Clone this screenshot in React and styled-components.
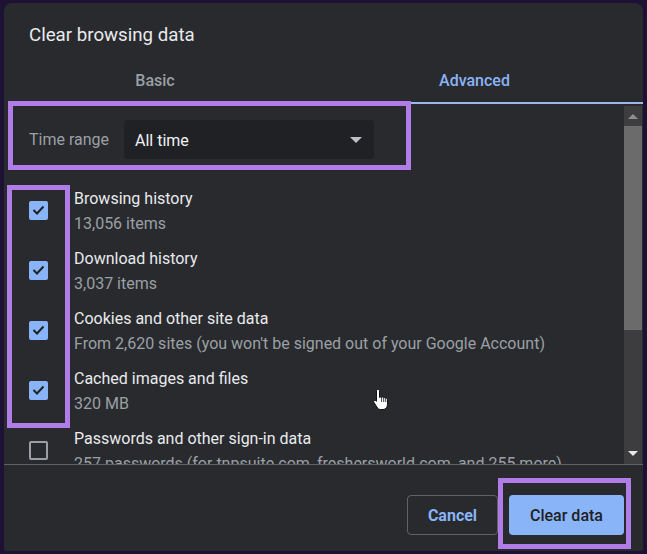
import React from "react";
import styled, { createGlobalStyle } from "styled-components";

const GlobalStyle = createGlobalStyle`
  html, body { margin: 0; padding: 0; }
  body {
    background: #1d1233;
    font-family: Roboto, "Liberation Sans", Arial, sans-serif;
    -webkit-font-smoothing: antialiased;
  }
  * { box-sizing: border-box; }
`;

const Page = styled.div`
  width: 647px;
  height: 554px;
  padding: 3px 4px;
`;

const Dialog = styled.div`
  position: relative;
  width: 639px;
  height: 548px;
  background: #292a2d;
  border-radius: 8px 8px 2px 2px;
  display: flex;
  flex-direction: column;
  overflow: hidden;
`;

const Title = styled.h1`
  margin: 0;
  height: 53px;
  padding: 20px 0 0 25px;
  font-size: 18.7px;
  line-height: 24px;
  font-weight: 400;
  color: #e8eaed;
`;

const Tabs = styled.div`
  display: flex;
  height: 48px;
  flex-shrink: 0;
`;

const Tab = styled.div`
  ${(p) => (p.$width ? `width: ${p.$width}px;` : "flex: 1;")}
  display: flex;
  align-items: center;
  justify-content: center;
  padding-top: 2px;
  font-size: 16px;
  font-weight: 500;
  color: ${(p) => (p.$active ? "#8ab4f8" : "#9aa0a6")};
  border-bottom: 2px solid ${(p) => (p.$active ? "#9db5f0" : "transparent")};
`;

const Body = styled.div`
  height: 360px;
  display: flex;
  flex-shrink: 0;
`;

const Content = styled.div`
  flex: 1;
  overflow: hidden;
`;

const TimeRow = styled.div`
  height: 76px;
  padding: 16px 0 0 25px;
  display: flex;
  align-items: flex-start;
`;

const TimeLabel = styled.span`
  height: 39px;
  line-height: 40px;
  width: 95px;
  font-size: 16px;
  color: #9aa0a6;
`;

const Select = styled.div`
  width: 250px;
  height: 39px;
  background: #202124;
  border-radius: 4px;
  padding: 1px 12px 0 11px;
  display: flex;
  align-items: center;
  justify-content: space-between;
  font-size: 16px;
  color: #f1f3f4;
`;

const Caret = styled.span`
  width: 0;
  height: 0;
  border-left: 6px solid transparent;
  border-right: 6px solid transparent;
  border-top: 6px solid #bdc1c6;
`;

const Row = styled.div`
  height: 60px;
  display: flex;
  align-items: center;
  padding-left: 25px;
`;

const Box = styled.div`
  width: 19px;
  height: 19px;
  border-radius: 2px;
  margin-right: 26px;
  flex-shrink: 0;
  display: flex;
  align-items: center;
  justify-content: center;
  background: ${(p) => (p.$checked ? "#8ab4f8" : "transparent")};
  border: ${(p) => (p.$checked ? "none" : "2px solid #9aa0a6")};
`;

const RowText = styled.div`
  display: flex;
  flex-direction: column;
  white-space: nowrap;
  padding-top: 2px;
`;

const RowTitle = styled.span`
  font-size: 16px;
  line-height: 25px;
  color: #e8eaed;
`;

const RowSub = styled.span`
  font-size: 16px;
  line-height: 25px;
  color: #9aa0a6;
`;

const Scrollbar = styled.div`
  width: 18px;
  margin-right: 1px;
  margin-top: 2px;
  background: #3d3d3f;
  display: flex;
  flex-direction: column;
`;

const ScrollBtn = styled.div`
  height: ${(p) => p.$h}px;
  display: flex;
  align-items: center;
  justify-content: center;
`;

const Arrow = styled.span`
  width: 0;
  height: 0;
  border-left: 5px solid transparent;
  border-right: 5px solid transparent;
  ${(p) =>
    p.$up
      ? "border-bottom: 5px solid #8f8f90;"
      : "border-top: 5px solid #e8e8e8;"}
`;

const Thumb = styled.div`
  height: 204px;
  background: #6b6b6c;
`;

const Track = styled.div`
  flex: 1;
`;

const Footer = styled.div`
  flex: 1;
  border-top: 1px solid #5f6368;
  display: flex;
  justify-content: flex-end;
  align-items: flex-start;
  padding: 30px 19px 0 0;
  gap: 11px;
`;

const Button = styled.button`
  height: 40px;
  width: ${(p) => p.$w}px;
  border-radius: 4px;
  font-family: inherit;
  font-size: 16px;
  font-weight: ${(p) => (p.$primary ? 500 : 700)};
  cursor: pointer;
  padding: 0;
  background: ${(p) => (p.$primary ? "#8ab4f8" : "transparent")};
  color: ${(p) => (p.$primary ? "#202124" : "#8ab4f8")};
  border: ${(p) => (p.$primary ? "none" : "1px solid #5f6368")};
`;

const Highlight = styled.div`
  position: absolute;
  left: ${(p) => p.$x}px;
  top: ${(p) => p.$y}px;
  width: ${(p) => p.$w}px;
  height: ${(p) => p.$h}px;
  border: 5px solid #b07de8;
  pointer-events: none;
`;

const Cursor = styled.svg`
  position: absolute;
  left: 368px;
  top: 385px;
`;

const Check = () => (
  <svg width="13" height="10" viewBox="0 0 13 10">
    <path d="M1.5 5 L5 8.5 L11.5 1.5" fill="none" stroke="#202124" strokeWidth="2" />
  </svg>
);

const items = [
  { title: "Browsing history", sub: "13,056 items", checked: true },
  { title: "Download history", sub: "3,037 items", checked: true },
  { title: "Cookies and other site data", sub: "From 2,620 sites (you won't be signed out of your Google Account)", checked: true },
  { title: "Cached images and files", sub: "320 MB", checked: true },
  { title: "Passwords and other sign-in data", sub: "257 passwords (for tnpsuite.com, freshersworld.com, and 255 more)", checked: false },
];

export default function App() {
  return (
    <>
      <GlobalStyle />
      <Page>
        <Dialog>
          <Title>Clear browsing data</Title>
          <Tabs>
            <Tab $width={302}>Basic</Tab>
            <Tab $active>Advanced</Tab>
          </Tabs>
          <Body>
            <Content>
              <TimeRow>
                <TimeLabel>Time range</TimeLabel>
                <Select>
                  <span>All time</span>
                  <Caret />
                </Select>
              </TimeRow>
              {items.map((it) => (
                <Row key={it.title}>
                  <Box $checked={it.checked}>{it.checked && <Check />}</Box>
                  <RowText>
                    <RowTitle>{it.title}</RowTitle>
                    <RowSub>{it.sub}</RowSub>
                  </RowText>
                </Row>
              ))}
            </Content>
            <Scrollbar>
              <ScrollBtn $h={20}>
                <Arrow $up />
              </ScrollBtn>
              <Thumb />
              <Track />
              <ScrollBtn $h={22}>
                <Arrow />
              </ScrollBtn>
            </Scrollbar>
          </Body>
          <Footer>
            <Button $w={91}>Cancel</Button>
            <Button $w={115} $primary>Clear data</Button>
          </Footer>
          <Highlight $x={4} $y={98} $w={403} $h={69} />
          <Highlight $x={3} $y={182} $w={63} $h={243} />
          <Highlight $x={494} $y={475} $w={133} $h={71} />
          <Cursor width="18" height="24" viewBox="0 0 18 24">
            <path
              d="M6 1.5 C6.9 1.5 7.5 2.2 7.5 3 V9.5 C8 9 9 8.9 9.6 9.4 C10.2 8.9 11.2 9 11.7 9.7 C12.3 9.3 13.3 9.5 13.7 10.3 C14.4 10 15.5 10.4 15.5 11.5 V16 C15.5 19 14 21.5 11 21.5 H8.8 C6.8 21.5 5.8 20.5 4.8 19 L2 14.5 C1.5 13.7 1.8 12.8 2.5 12.5 C3.2 12.2 3.9 12.6 4.5 13.3 V3 C4.5 2.2 5.1 1.5 6 1.5 Z"
              fill="#ffffff"
              stroke="#111"
              strokeWidth="1"
            />
            <path d="M9.6 9.4 V14 M11.7 9.7 V14 M13.7 10.3 V14" stroke="#111" strokeWidth="0.8" fill="none" />
          </Cursor>
        </Dialog>
      </Page>
    </>
  );
}
